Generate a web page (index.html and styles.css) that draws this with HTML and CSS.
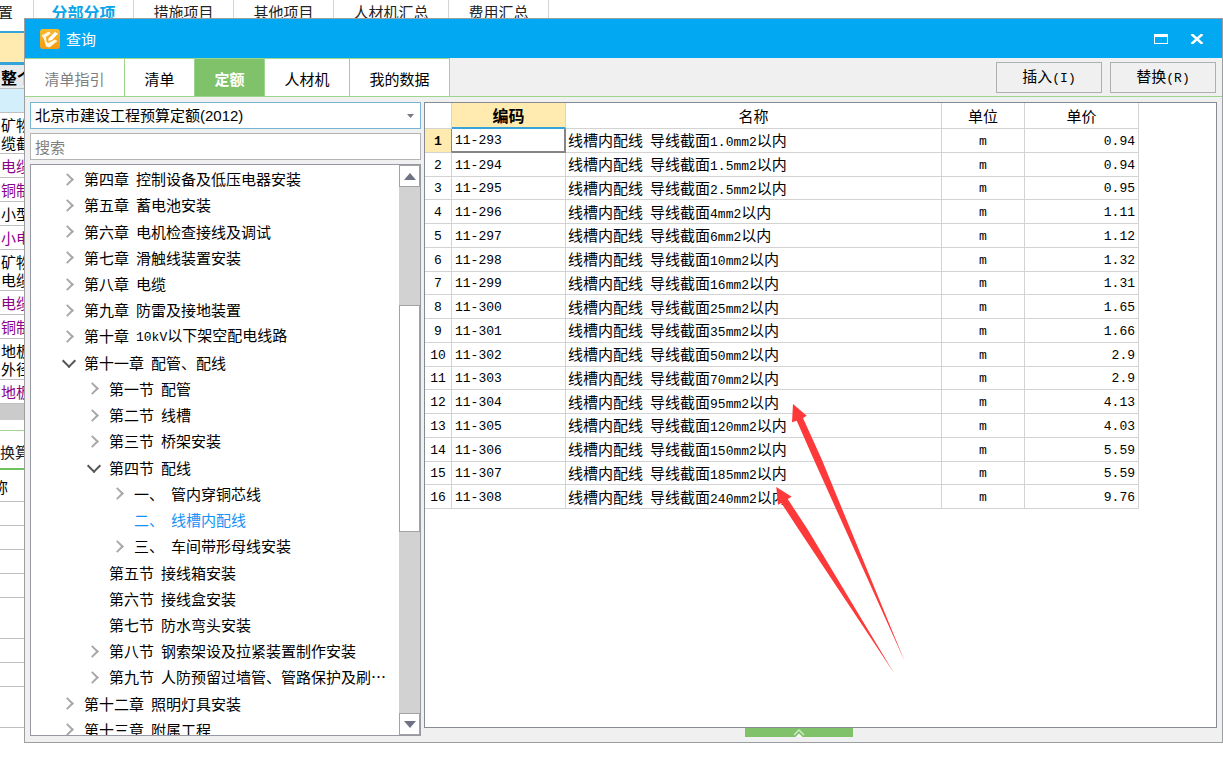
FILE: index.html
```
<!DOCTYPE html>
<html lang="zh-CN">
<head>
<meta charset="utf-8">
<title>查询</title>
<link rel="stylesheet" href="styles.css">
</head>
<body>
<main class="workspace">
  <nav class="main-tabs">
    <a class="main-tab first" href="#">置</a>
    <a class="main-tab current" href="#">分部分项</a>
    <a class="main-tab" href="#">措施项目</a>
    <a class="main-tab" href="#">其他项目</a>
    <a class="main-tab wide" href="#">人材机汇总</a>
    <a class="main-tab" href="#">费用汇总</a>
  </nav>
  <div class="sheet">
    <div class="sheet-head"></div>
    <div class="sheet-row total">整个</div>
    <div class="sheet-row picked"></div>
    <div class="sheet-row double">矿物<br>缆截</div>
    <div class="sheet-row sub">电缆</div>
    <div class="sheet-row sub">铜制</div>
    <div class="sheet-row">小型</div>
    <div class="sheet-row sub">小电</div>
    <div class="sheet-row double">矿物<br>电缆</div>
    <div class="sheet-row sub">电缆</div>
    <div class="sheet-row sub">铜制</div>
    <div class="sheet-row double">地板<br>外径</div>
    <div class="sheet-row sub">地板</div>
    <div class="sheet-scroll"></div>
    <div class="lower-tabs">换算</div>
    <div class="lower-row lower-head">称</div>
    <div class="lower-row"></div>
    <div class="lower-row"></div>
    <div class="lower-row"></div>
    <div class="lower-row"></div>
    <div class="lower-row tall"></div>
    <div class="lower-row"></div>
    <div class="lower-row"></div>
    <div class="lower-row tall"></div>
  </div>

  <section class="dialog" aria-label="查询">
    <header class="titlebar">
      <svg class="app-icon" viewBox="0 0 20 20" aria-hidden="true">
        <defs><linearGradient id="amber" x1="0" y1="0" x2="0" y2="1"><stop offset="0" stop-color="#f8b92c"/><stop offset="1" stop-color="#f39a12"/></linearGradient></defs>
        <rect width="20" height="20" rx="3" fill="url(#amber)"/>
        <path d="M1.500 6.500L9 2.500L11 4.500L6 8L6.500 12.500L8 14L15 10.500L17.500 12L9.500 18.500L6 17.500L4 10Z" fill="#fff6e0"/>
        <path d="M8 9.500L15 2.500L18.500 4.500L12 11.500L8 12.500Z" fill="#fff" stroke="#f6aa20" stroke-width="0.800"/>
      </svg>
      <h1 class="title">查询</h1>
      <button class="win-btn" type="button" aria-label="最大化"><svg width="14" height="10" viewBox="0 0 14 10"><path d="M0 0H14V10H0ZM1 3V9H13V3Z" fill="#fff" fill-rule="evenodd"/></svg></button>
      <button class="win-btn" type="button" aria-label="关闭"><svg width="14" height="10" viewBox="0 0 14 10"><path d="M1.500 0L12.500 10M12.500 0L1.500 10" stroke="#fff" stroke-width="2.500"/></svg></button>
    </header>
    <div class="toolbar">
      <nav class="tabs">
        <button class="tab guide" type="button">清单指引</button>
        <button class="tab" type="button">清单</button>
        <button class="tab active" type="button">定额</button>
        <button class="tab mid" type="button">人材机</button>
        <button class="tab long" type="button">我的数据</button>
      </nav>
      <div class="actions">
        <button class="action" type="button">插入<span class="latin">(I)</span></button>
        <button class="action" type="button">替换<span class="latin">(R)</span></button>
      </div>
    </div>
    <div class="body">
      <aside class="side">
        <div class="combo">
          <select class="combo-select" aria-label="定额库"><option>北京市建设工程预算定额(2012)</option></select>
          <svg class="combo-arrow" width="7" height="4" viewBox="0 0 7 4" aria-hidden="true"><path d="M0 0H7L3.500 4Z" fill="#777a85"/></svg>
        </div>
        <input class="search" type="text" placeholder="搜索" aria-label="搜索">
        <div class="tree">
          <ul class="tree-list">
            <li class="node"><i class="arrow"></i><span>第四章</span><span>控制设备及低压电器安装</span></li>
            <li class="node"><i class="arrow"></i><span>第五章</span><span>蓄电池安装</span></li>
            <li class="node"><i class="arrow"></i><span>第六章</span><span>电机检查接线及调试</span></li>
            <li class="node"><i class="arrow"></i><span>第七章</span><span>滑触线装置安装</span></li>
            <li class="node"><i class="arrow"></i><span>第八章</span><span>电缆</span></li>
            <li class="node"><i class="arrow"></i><span>第九章</span><span>防雷及接地装置</span></li>
            <li class="node"><i class="arrow"></i><span>第十章</span><span><span class="latin">10kV</span>以下架空配电线路</span></li>
            <li class="node"><i class="arrow open"></i><span>第十一章</span><span>配管、配线</span></li>
            <li class="node l2"><i class="arrow"></i><span>第一节</span><span>配管</span></li>
            <li class="node l2"><i class="arrow"></i><span>第二节</span><span>线槽</span></li>
            <li class="node l2"><i class="arrow"></i><span>第三节</span><span>桥架安装</span></li>
            <li class="node l2"><i class="arrow open"></i><span>第四节</span><span>配线</span></li>
            <li class="node l3"><i class="arrow"></i><span>一、</span><span>管内穿铜芯线</span></li>
            <li class="node l3 selected"><i class="arrow none"></i><span>二、</span><span>线槽内配线</span></li>
            <li class="node l3"><i class="arrow"></i><span>三、</span><span>车间带形母线安装</span></li>
            <li class="node l2"><i class="arrow none"></i><span>第五节</span><span>接线箱安装</span></li>
            <li class="node l2"><i class="arrow none"></i><span>第六节</span><span>接线盒安装</span></li>
            <li class="node l2"><i class="arrow none"></i><span>第七节</span><span>防水弯头安装</span></li>
            <li class="node l2"><i class="arrow"></i><span>第八节</span><span>钢索架设及拉紧装置制作安装</span></li>
            <li class="node l2"><i class="arrow"></i><span>第九节</span><span>人防预留过墙管、管路保护及刷⋯</span></li>
            <li class="node"><i class="arrow"></i><span>第十二章</span><span>照明灯具安装</span></li>
            <li class="node"><i class="arrow"></i><span>第十三章</span><span>附属工程</span></li>
          </ul>
          <div class="scrollbar">
            <button class="scroll-btn" type="button" aria-label="向上"><svg width="12" height="7" viewBox="0 0 12 7"><path d="M6 0L12 7H0Z" fill="#6f7285"/></svg></button>
            <div class="track"><div class="thumb"></div></div>
            <button class="scroll-btn" type="button" aria-label="向下"><svg width="12" height="7" viewBox="0 0 12 7"><path d="M0 0H12L6 7Z" fill="#6f7285"/></svg></button>
          </div>
        </div>
      </aside>
      <div class="results">
        <div class="grid-box">
          <table class="grid">
            <colgroup><col class="c-no"><col class="c-code"><col class="c-name"><col class="c-unit"><col class="c-price"></colgroup>
            <thead><tr><th></th><th class="sorted">编码</th><th>名称</th><th>单位</th><th>单价</th></tr></thead>
            <tbody>
              <tr class="current"><td>1</td><td>11-293</td><td><span class="kind">线槽内配线</span>导线截面<span class="latin">1.0mm2</span>以内</td><td>m</td><td>0.94</td></tr>
              <tr><td>2</td><td>11-294</td><td><span class="kind">线槽内配线</span>导线截面<span class="latin">1.5mm2</span>以内</td><td>m</td><td>0.94</td></tr>
              <tr><td>3</td><td>11-295</td><td><span class="kind">线槽内配线</span>导线截面<span class="latin">2.5mm2</span>以内</td><td>m</td><td>0.95</td></tr>
              <tr><td>4</td><td>11-296</td><td><span class="kind">线槽内配线</span>导线截面<span class="latin">4mm2</span>以内</td><td>m</td><td>1.11</td></tr>
              <tr><td>5</td><td>11-297</td><td><span class="kind">线槽内配线</span>导线截面<span class="latin">6mm2</span>以内</td><td>m</td><td>1.12</td></tr>
              <tr><td>6</td><td>11-298</td><td><span class="kind">线槽内配线</span>导线截面<span class="latin">10mm2</span>以内</td><td>m</td><td>1.32</td></tr>
              <tr><td>7</td><td>11-299</td><td><span class="kind">线槽内配线</span>导线截面<span class="latin">16mm2</span>以内</td><td>m</td><td>1.31</td></tr>
              <tr><td>8</td><td>11-300</td><td><span class="kind">线槽内配线</span>导线截面<span class="latin">25mm2</span>以内</td><td>m</td><td>1.65</td></tr>
              <tr><td>9</td><td>11-301</td><td><span class="kind">线槽内配线</span>导线截面<span class="latin">35mm2</span>以内</td><td>m</td><td>1.66</td></tr>
              <tr><td>10</td><td>11-302</td><td><span class="kind">线槽内配线</span>导线截面<span class="latin">50mm2</span>以内</td><td>m</td><td>2.9</td></tr>
              <tr><td>11</td><td>11-303</td><td><span class="kind">线槽内配线</span>导线截面<span class="latin">70mm2</span>以内</td><td>m</td><td>2.9</td></tr>
              <tr><td>12</td><td>11-304</td><td><span class="kind">线槽内配线</span>导线截面<span class="latin">95mm2</span>以内</td><td>m</td><td>4.13</td></tr>
              <tr><td>13</td><td>11-305</td><td><span class="kind">线槽内配线</span>导线截面<span class="latin">120mm2</span>以内</td><td>m</td><td>4.03</td></tr>
              <tr><td>14</td><td>11-306</td><td><span class="kind">线槽内配线</span>导线截面<span class="latin">150mm2</span>以内</td><td>m</td><td>5.59</td></tr>
              <tr><td>15</td><td>11-307</td><td><span class="kind">线槽内配线</span>导线截面<span class="latin">185mm2</span>以内</td><td>m</td><td>5.59</td></tr>
              <tr><td>16</td><td>11-308</td><td><span class="kind">线槽内配线</span>导线截面<span class="latin">240mm2</span>以内</td><td>m</td><td>9.76</td></tr>
            </tbody>
          </table>
        </div>
        <button class="expander" type="button" aria-label="展开"><svg width="12" height="8" viewBox="0 0 12 8"><path d="M1 6L6 1L11 6" fill="none" stroke="#cfe9c6" stroke-width="1.500"/><path d="M2.500 8L6 4.500L9.500 8Z" fill="#fff"/></svg></button>
      </div>
    </div>
  </section>

  <svg class="marks" width="130" height="270" viewBox="776 404 130 270" aria-hidden="true">
    <path d="M793 404L806.700 415.700L803 418L822 460L905 662L814 460L796.700 420.700L792 422.300Z" fill="#fd3a39"/>
    <path d="M776.300 487L791.700 496.700L787.700 499L808 530L894 673L799 530L781.300 503L778 504.700Z" fill="#fd3a39"/>
  </svg>
</main>
</body>
</html>
```
FILE: styles.css
```
* { box-sizing: border-box; }
body {
  margin: 0;
  background: #fff;
  color: #000;
  font: 15px/18px "Noto Sans CJK SC", sans-serif;
}
button, input, select { font: inherit; color: inherit; margin: 0; padding: 0; border-radius: 0; }
button { background: none; border: 0; }
.latin { font-family: "Liberation Mono", monospace; font-size: 13px; }

.workspace { position: relative; min-height: 100vh; overflow: hidden; }

/* Window behind the dialog */
.main-tabs { display: flex; height: 31px; }
.main-tab {
  width: 100px;
  padding-top: 3px;
  border-right: 1px solid #d4d4d4;
  color: #222;
  text-align: center;
  text-decoration: none;
}
.main-tab.first { width: 34px; text-align: left; text-indent: -2px; }
.main-tab.wide { width: 115px; }
.main-tab.current { color: #0ba5ea; font-weight: 700; font-size: 16px; }
.sheet { width: 25px; overflow: hidden; white-space: nowrap; }
.sheet-head { height: 34px; background: #ffebb0; border-top: 2px solid #35a3d8; border-bottom: 3px solid #35a3d8; }
.sheet-row { height: 24px; padding: 3px 0 0 1px; border-bottom: 1px solid #bfbfbf; }
.sheet-row.total { background: #e8eaec; font-weight: 700; font-size: 16px; }
.sheet-row.picked { background: #d3effb; }
.sheet-row.double { height: 41px; padding-top: 3px; }
.sheet-row.sub { color: #8b008b; }
.sheet-scroll { height: 16px; background: #cbcbcb; }
.lower-tabs { height: 40px; margin-top: 10px; padding-top: 12px; border-top: 1px solid #a5d896; border-bottom: 2px solid #6fc35c; color: #222; }
.lower-row { height: 24px; border-bottom: 1px solid #bfbfbf; }
.lower-head { height: 32px; padding-top: 8px; text-indent: -7px; }
.lower-row.tall { height: 41px; }

/* Dialog */
.dialog {
  position: absolute;
  top: 18px;
  right: 0;
  bottom: 16px;
  left: 24px;
  display: flex;
  flex-direction: column;
  background: #f0f0f0;
  border: 1px solid #9c9ea2;
}
.titlebar { display: flex; align-items: center; height: 39px; padding: 0 7px 0 15px; background: #02a8f2; color: #fff; }
.app-icon { width: 20px; height: 20px; }
.title { flex: 1; margin: 0 0 0 6px; font-size: 15px; font-weight: 400; }
.win-btn { display: grid; place-items: center; width: 36px; height: 32px; }
.toolbar { display: flex; justify-content: space-between; height: 39px; border-bottom: 1px solid #9bd68c; }
.tabs { display: flex; border-top: 1px solid #9bd68c; background: #fff; }
.tab { width: 70px; border-right: 1px solid #9bd68c; padding-top: 2px; }
.tab.guide { width: 100px; color: #808080; }
.tab.mid { width: 85px; }
.tab.long { width: 100px; }
.tab.active { background: #7fc26a; color: #fff; font-weight: 700; }
.actions { display: flex; gap: 8px; padding: 4px 6px 3px 0; }
.action { width: 106px; border: 1px solid #adb0b2; }
.body { flex: 1; display: flex; gap: 3px; min-height: 0; padding: 5px 5px 0 5px; }
.side { display: flex; flex-direction: column; gap: 4px; width: 391px; padding-bottom: 6px; }
.combo { display: grid; align-items: center; }
.combo-select {
  grid-area: 1 / 1;
  width: 100%;
  height: 27px;
  padding: 0 20px 0 4px;
  border: 1px solid #76b5d3;
  background: #fff;
  appearance: none;
  font-family: "Liberation Sans", "Noto Sans CJK SC", sans-serif;
}
.combo-arrow { grid-area: 1 / 1; justify-self: end; margin-right: 7px; pointer-events: none; }
.search { width: 100%; height: 27px; padding: 0 4px; border: 1px solid #b4b4b4; background: #fff; }
.search::placeholder { color: #808080; opacity: 1; }
.tree { flex: 1; display: flex; min-height: 0; border: 1px solid #9699a3; background: #fff; overflow: hidden; }
.tree-list {
  flex: 1;
  display: grid;
  grid-auto-rows: 1fr;
  height: 578px;
  margin: 0;
  padding: 1px 0 0;
  list-style: none;
}
.node { display: flex; align-items: center; gap: 7px; padding-left: 32px; white-space: nowrap; }
.node.l2 { padding-left: 57px; }
.node.l3 { padding-left: 82px; }
.node.selected { color: #1592f5; }
.arrow { display: grid; place-items: center; width: 14px; height: 14px; padding-right: 6px; }
.arrow::before {
  content: "";
  width: 7px;
  height: 7px;
  border: solid #a8a8a8;
  border-width: 2px 2px 0 0;
  transform: rotate(45deg);
}
.arrow.open { padding: 0 2px 6px 0; }
.arrow.open::before { width: 8px; height: 8px; border-color: #555; transform: rotate(135deg); }
.arrow.none::before { display: none; }
.scrollbar { display: flex; flex-direction: column; width: 21px; background: #d2d2d2; }
.scroll-btn { display: grid; place-items: center; height: 22px; border: 1px solid #a2a2a2; background: #fff; }
.track { flex: 1; padding-top: 118px; }
.thumb { height: 227px; border: 1px solid #a2a2a2; background: #fff; }
.results { flex: 1; display: flex; flex-direction: column; min-width: 0; padding-bottom: 5px; }
.grid-box { flex: 1; border: 1px solid #858a93; background: #fff; overflow: hidden; }
.grid { width: 714px; height: 406px; table-layout: fixed; border-collapse: separate; border-spacing: 0; }
.c-no { width: 27px; }
.c-code { width: 114px; }
.c-name { width: 376px; }
.c-unit { width: 83px; }
.c-price { width: 114px; }
.grid th, .grid td { padding: 0; border-right: 1px solid #d3d3d3; border-bottom: 1px solid #d3d3d3; white-space: nowrap; }
.grid th { height: 26px; font-weight: 400; }
.grid .sorted { background: #ffebb0; border-bottom: 2px solid #35a3d8; font-weight: 700; font-size: 16px; }
.grid td { padding-top: 3px; line-height: 16px; text-align: center; font-family: "Liberation Mono", monospace; font-size: 13px; }
.grid td:nth-child(2) { padding-left: 3px; text-align: left; }
.grid td:nth-child(3) { padding-left: 2px; text-align: left; font-family: "Noto Sans CJK SC", sans-serif; font-size: 15px; }
.grid td:nth-child(5) { padding-right: 3px; text-align: right; }
.grid .current td:nth-child(1) { background: #ffebb0; border-right-color: #35a3d8; font-weight: 700; }
.grid .current td:nth-child(2) { border-right: 2px solid #858585; border-bottom: 2px solid #858585; }
.kind { margin-right: 7px; }
.expander { display: grid; place-items: center; width: 108px; height: 9px; margin-left: 321px; background: #7fc26a; }

/* Red annotation arrows over the results */
.marks { position: absolute; left: 776px; top: 404px; pointer-events: none; }
```
